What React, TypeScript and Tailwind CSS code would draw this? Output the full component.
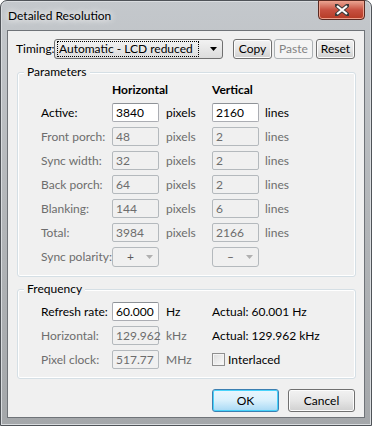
import { ReactNode } from "react";

const font = { fontFamily: 'Lato, "Noto Sans", sans-serif' };

const Field = ({ value, disabled }: { value: string; disabled?: boolean }) => (
  <div
    className={
      disabled
        ? "h-[19px] w-[47px] whitespace-nowrap rounded-[2px] border border-[#b4b9bd] bg-[#f0f0f0] px-[3px] text-[#6d6d6d] leading-[17px]"
        : "h-[19px] w-[47px] whitespace-nowrap rounded-[2px] border border-[#abadb3] border-t-[#8e9297] bg-white px-[3px] text-black leading-[17px]"
    }
  >
    {value}
  </div>
);

const Btn = ({ children, w, disabled, primary }: { children: ReactNode; w: string; disabled?: boolean; primary?: boolean }) => {
  let cls = "flex items-center justify-center rounded-[3px] border ";
  if (disabled) cls += "border-[#adb2b5] bg-[#f4f4f4] text-[#838383]";
  else if (primary)
    cls += "border-[#3c7fb1] bg-gradient-to-b from-[#eaf6fd] via-[#d9f0fc] to-[#a7d9f5] text-black shadow-[inset_0_0_0_1px_#48d3fb]";
  else cls += "border-[#707070] bg-gradient-to-b from-[#f2f2f2] via-[#e6e6e6] to-[#d0d0d0] text-black shadow-[inset_0_0_0_1px_#fcfcfc]";
  return <div className={cls + " " + w}>{children}</div>;
};

const Arrow = ({ color }: { color: string }) => (
  <svg width="7" height="4" viewBox="0 0 7 4">
    <path d="M0 0 H7 L3.5 4 Z" fill={color} />
  </svg>
);

const Group = ({ title, className, children }: { title: string; className: string; children: ReactNode }) => (
  <div className={"relative rounded-[3px] border border-[#d5dfe5] shadow-[inset_0_0_0_1px_#fff] " + className}>
    <span className="absolute -top-[9px] left-[6px] bg-[#f0f0f0] px-[3px] leading-[16px] text-black">{title}</span>
    {children}
  </div>
);

const Label = ({ children, disabled }: { children: ReactNode; disabled?: boolean }) => (
  <div className={"whitespace-nowrap leading-[19px] " + (disabled ? "text-[#6d6d6d]" : "text-black")}>{children}</div>
);

const Unit = ({ children, disabled }: { children: ReactNode; disabled?: boolean }) => (
  <div className={"whitespace-nowrap pl-[7px] leading-[19px] " + (disabled ? "text-[#6d6d6d]" : "text-black")}>{children}</div>
);

const rows = [
  { label: "Front porch:", h: "48", v: "2" },
  { label: "Sync width:", h: "32", v: "2" },
  { label: "Back porch:", h: "64", v: "2" },
  { label: "Blanking:", h: "144", v: "6" },
  { label: "Total:", h: "3984", v: "2166" },
];

export default function App() {
  return (
    <div className="h-[426px] w-[372px] text-[12px]" style={font}>
      <div className="flex h-full w-full flex-col rounded-t-[7px] border border-[#4f5358] bg-gradient-to-b from-[#c4c8cc] via-[#b3b6b9] to-[#a4a7aa] shadow-[inset_0_0_0_1px_#d9dcdf]">
        {/* title bar */}
        <div className="relative flex h-[29px] shrink-0 items-center pl-[7px] text-black">
          <span className="[text-shadow:0_0_8px_#fff,0_0_6px_#fff]">Detailed Resolution</span>
          <div className="absolute -top-[1px] right-[6px] flex h-[20px] w-[47px] items-center justify-center rounded-b-[4px] border border-[#5a2a22] bg-gradient-to-b from-[#e8a493] via-[#c75040] to-[#b53a24] shadow-[inset_0_0_0_1px_#eea08c]">
            <svg width="14" height="12" viewBox="0 0 14 12">
              <path d="M1.5 1.5 L12.5 10.5 M12.5 1.5 L1.5 10.5" stroke="#3a3a3a" strokeWidth="4" strokeLinecap="square" />
              <path d="M2 2 L12 10 M12 2 L2 10" stroke="#fff" strokeWidth="2.2" />
            </svg>
          </div>
        </div>

        {/* client */}
        <div className="mx-[6px] mb-[7px] flex flex-1 flex-col border border-[#6f7378] bg-[#f0f0f0] pl-[8px] pr-[8px] pt-[8px]">
          {/* timing row */}
          <div className="flex h-[20px] items-center whitespace-nowrap">
            <span className="w-[38px] text-black">Timing:</span>
            <div className="flex h-[20px] w-[169px] items-center rounded-[3px] border border-[#707070] bg-gradient-to-b from-[#f2f2f2] to-[#dcdcdc] pl-[2px] pr-[5px]">
              <div className="flex h-[16px] flex-1 items-center border border-dotted border-black pl-[1px] text-black leading-[14px]">
                Automatic - LCD reduced
              </div>
              <div className="ml-[11px]">
                <Arrow color="#000" />
              </div>
            </div>
            <div className="ml-[10px] flex h-[20px]">
              <Btn w="w-[39px]">Copy</Btn>
              <Btn w="ml-[2px] w-[39px]" disabled>
                Paste
              </Btn>
              <Btn w="ml-[3px] w-[39px]">Reset</Btn>
            </div>
          </div>

          {/* parameters */}
          <Group title="Parameters" className="ml-[1px] mt-[13px] h-[205px] w-[339px] pl-[23px] pt-[8px]">
            <div className="grid grid-cols-[71px_47px_53px_47px_auto] gap-y-[5px]">
              <div />
              <div className="font-bold leading-[17px] text-black">Horizontal</div>
              <div />
              <div className="font-bold leading-[17px] text-black">Vertical</div>
              <div />

              <Label>Active:</Label>
              <Field value="3840" />
              <Unit>pixels</Unit>
              <Field value="2160" />
              <div className="pl-[6px] leading-[19px]">lines</div>

              {rows.map((r) => (
                <div key={r.label} className="contents">
                  <Label disabled>{r.label}</Label>
                  <Field value={r.h} disabled />
                  <Unit disabled>pixels</Unit>
                  <Field value={r.v} disabled />
                  <div className="pl-[6px] leading-[19px] text-[#6d6d6d]">lines</div>
                </div>
              ))}

              <Label disabled>Sync polarity:</Label>
              <div className="flex h-[20px] w-[47px] items-center rounded-[3px] border border-[#b4b9bd] pl-[14px] pr-[5px] text-[#5a5a5a]">
                <span className="flex-1">+</span>
                <Arrow color="#b0b0b0" />
              </div>
              <div />
              <div className="flex h-[20px] w-[47px] items-center rounded-[3px] border border-[#b4b9bd] pl-[14px] pr-[5px] text-[#5a5a5a]">
                <span className="flex-1">–</span>
                <Arrow color="#b0b0b0" />
              </div>
              <div />
            </div>
          </Group>

          {/* frequency */}
          <Group title="Frequency" className="ml-[1px] mt-[12px] h-[90px] w-[339px] pl-[23px] pt-[12px]">
            <div className="grid grid-cols-[71px_47px_53px_auto] gap-y-[5px]">
              <Label>Refresh rate:</Label>
              <Field value="60.000" />
              <Unit>Hz</Unit>
              <div className="leading-[19px] text-black">Actual: 60.001 Hz</div>

              <Label disabled>Horizontal:</Label>
              <Field value="129.962" disabled />
              <Unit disabled>kHz</Unit>
              <div className="leading-[19px] text-black">Actual: 129.962 kHz</div>

              <Label disabled>Pixel clock:</Label>
              <Field value="517.77" disabled />
              <Unit disabled>MHz</Unit>
              <div className="flex items-center gap-[3px] leading-[19px] text-black">
                <div className="h-[13px] w-[13px] border border-[#8f8f8f] bg-gradient-to-br from-[#dcdcdc] to-[#fbfbfb] shadow-[inset_0_0_0_1px_#f4f4f4]" />
                Interlaced
              </div>
            </div>
          </Group>

          {/* buttons */}
          <div className="mt-[10px] flex justify-end gap-[9px] pr-[1px]">
            <Btn w="h-[23px] w-[67px]" primary>
              OK
            </Btn>
            <Btn w="h-[23px] w-[67px]">Cancel</Btn>
          </div>
        </div>
      </div>
    </div>
  );
}
